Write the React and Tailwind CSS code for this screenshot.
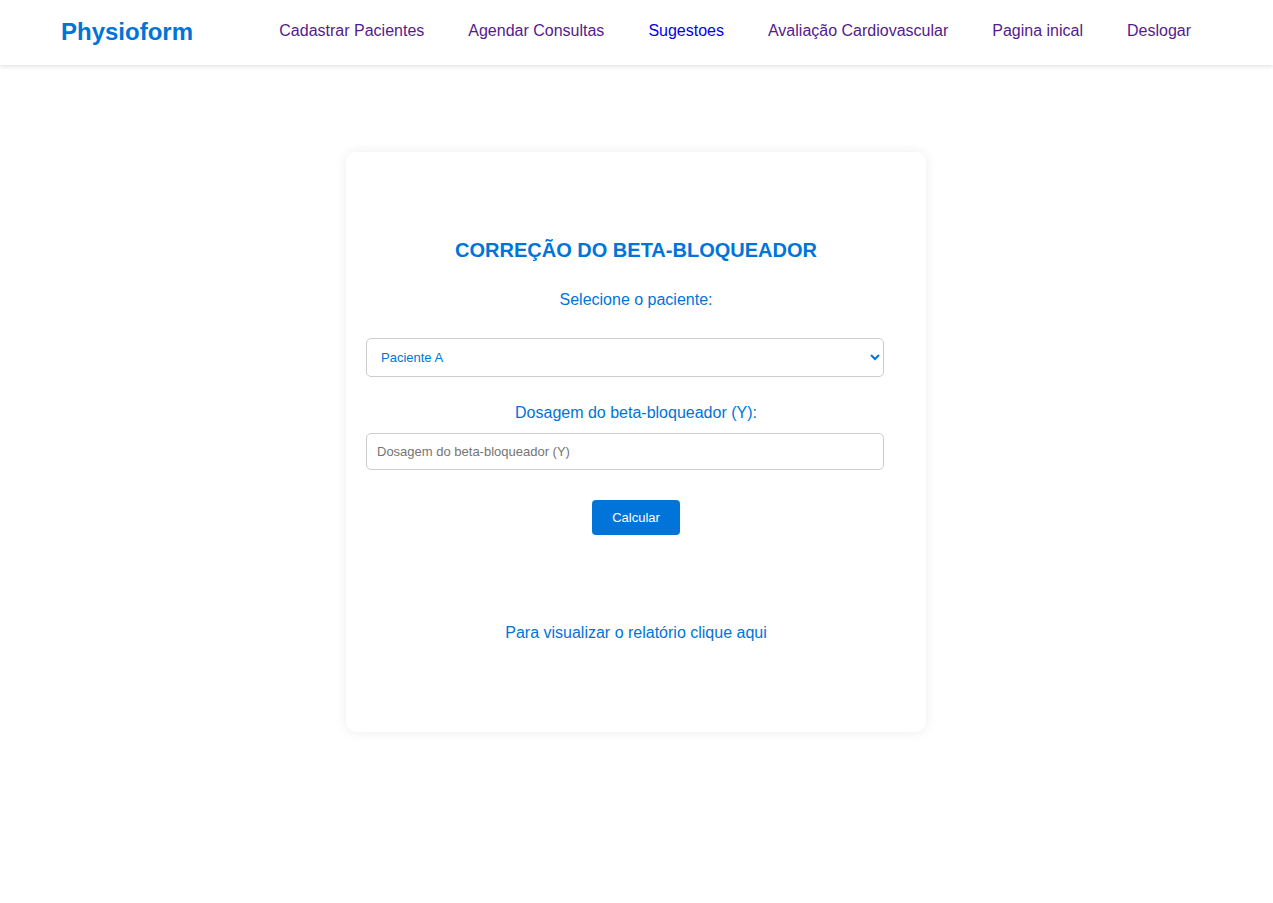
import React from 'react'

const navLinks = [
  { label: 'Cadastrar Pacientes', visited: true },
  { label: 'Agendar Consultas', visited: true },
  { label: 'Sugestoes', visited: false },
  { label: 'Avaliação Cardiovascular', visited: true },
  { label: 'Pagina inical', visited: true },
  { label: 'Deslogar', visited: true },
]

const App = () => {
  return (
    <div className="min-h-screen bg-white" style={{ fontFamily: '"Liberation Sans", Arial, sans-serif' }}>
      {/* Header */}
      <header className="h-[65px] flex items-center pl-[61px] pr-[82px] pb-[3px] bg-white shadow-[0_2px_4px_rgba(0,0,0,0.1)] relative z-10">
        <a href="#" className="text-[24px] font-bold text-[#0074d9] leading-none mt-[1px]">Physioform</a>
        <nav className="ml-auto flex items-center gap-[44px]">
          {navLinks.map((l) => (
            <a
              key={l.label}
              href="#"
              className={`text-[16px] leading-none ${l.visited ? 'text-[#551a8b]' : 'text-[#0000ee]'}`}
            >
              {l.label}
            </a>
          ))}
        </nav>
      </header>

      <main className="flex justify-center pt-[87px] pr-[1px]">
        <div className="w-[580px] h-[580px] bg-white rounded-[10px] shadow-[0_0_12px_rgba(0,0,0,0.08)] px-5 pt-[86px] flex flex-col items-center text-[#0074d9]">
          <h2 className="text-[20px] leading-[24px] font-bold">CORREÇÃO DO BETA-BLOQUEADOR</h2>

          <label className="mt-[29px] text-[16px] leading-[18px]">Selecione o paciente:</label>
          <select className="mt-[29px] self-start w-[518px] h-[39px] border border-[#ccc] rounded-[5px] pl-[10px] pr-2 text-[13px] text-[#0074d9] bg-white">
            <option>Paciente A</option>
            <option>Paciente B</option>
          </select>

          <label className="mt-[27px] text-[16px] leading-[18px]">Dosagem do beta-bloqueador (Y):</label>
          <input
            type="text"
            placeholder="Dosagem do beta-bloqueador (Y)"
            className="mt-[11px] self-start w-[518px] h-[37px] border border-[#ccc] rounded-[5px] px-[10px] text-[13px] placeholder:text-[#757575] outline-none"
          />

          <button className="mt-[30px] w-[88px] h-[35px] bg-[#0074d9] text-white text-[13px] rounded-[4px]">
            Calcular
          </button>

          <a href="#" className="mt-[89px] text-[16px] leading-[18px] text-[#0074d9]">
            Para visualizar o relatório clique aqui
          </a>
        </div>
      </main>
    </div>
  )
}

export default App
